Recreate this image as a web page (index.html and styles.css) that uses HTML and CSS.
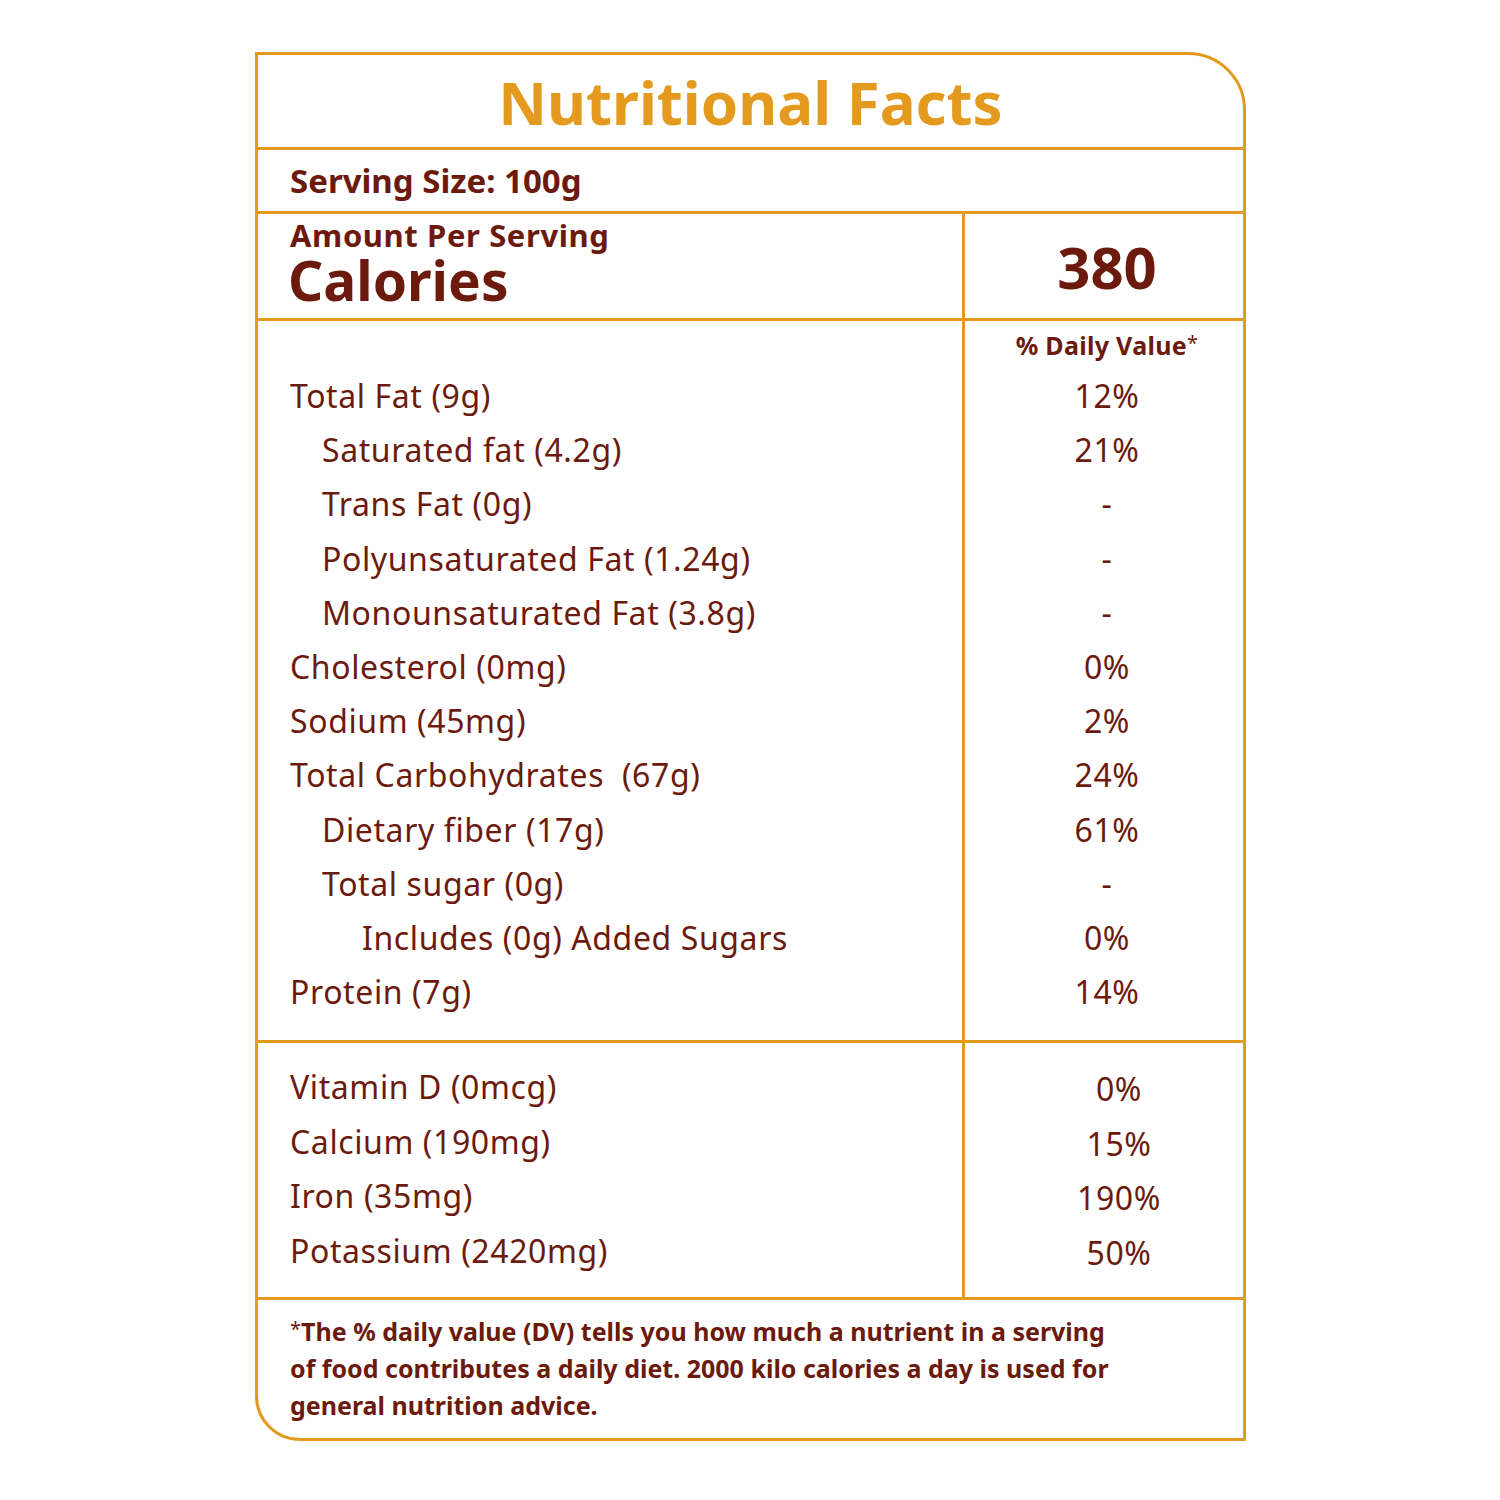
FILE: index.html
```html
<!DOCTYPE html>
<html>
<head>
<meta charset="utf-8">
<link rel="stylesheet" href="styles.css">
</head>
<body>
<div class="card">
  <div class="title">Nutritional Facts</div>
  <div class="serving">Serving Size: 100g</div>
  <div class="cal-row">
    <div class="cal-left">
      <div class="amount">Amount Per Serving</div>
      <div class="calories">Calories</div>
    </div>
    <div class="cal-right">380</div>
  </div>
  <div class="split main">
    <div class="col-left">
      <div class="dv-spacer"></div>
      <div class="row">Total Fat (9g)</div>
      <div class="row in1">Saturated fat (4.2g)</div>
      <div class="row in1">Trans Fat (0g)</div>
      <div class="row in1">Polyunsaturated Fat (1.24g)</div>
      <div class="row in1">Monounsaturated Fat (3.8g)</div>
      <div class="row">Cholesterol (0mg)</div>
      <div class="row">Sodium (45mg)</div>
      <div class="row">Total Carbohydrates&nbsp; (67g)</div>
      <div class="row in1">Dietary fiber (17g)</div>
      <div class="row in1">Total sugar (0g)</div>
      <div class="row in2">Includes (0g) Added Sugars</div>
      <div class="row">Protein (7g)</div>
    </div>
    <div class="col-right">
      <div class="dv">% Daily Value<span class="ast">*</span></div>
      <div class="row">12%</div>
      <div class="row">21%</div>
      <div class="row">-</div>
      <div class="row">-</div>
      <div class="row">-</div>
      <div class="row">0%</div>
      <div class="row">2%</div>
      <div class="row">24%</div>
      <div class="row">61%</div>
      <div class="row">-</div>
      <div class="row">0%</div>
      <div class="row">14%</div>
    </div>
  </div>
  <div class="split vit">
    <div class="col-left">
      <div class="vrow">Vitamin D (0mcg)</div>
      <div class="vrow">Calcium (190mg)</div>
      <div class="vrow">Iron (35mg)</div>
      <div class="vrow">Potassium (2420mg)</div>
    </div>
    <div class="col-right vcol">
      <div class="vrow">0%</div>
      <div class="vrow">15%</div>
      <div class="vrow">190%</div>
      <div class="vrow">50%</div>
    </div>
  </div>
  <div class="foot"><span class="ast">*</span>The % daily value (DV) tells you how much a nutrient in a serving<br>of food contributes a daily diet. 2000 kilo calories a day is used for<br>general nutrition advice.</div>
</div>
</body>
</html>
```

FILE: styles.css
```css
* { box-sizing: border-box; }
html, body { margin: 0; padding: 0; background: #ffffff; }
body {
  font-family: "Noto Sans", "Open Sans", sans-serif;
  color: #6b1a0d;
}
.card {
  margin: 52px 0 0 255px;
  width: 991px;
  border: 3px solid #e39a1e;
  border-radius: 0 58px 0 45px;
}
.title {
  height: 95px;
  border-bottom: 3px solid #e39a1e;
  text-align: center;
  color: #e39a1e;
  font-weight: 700;
  font-size: 60px;
  line-height: 94px;
  letter-spacing: 0;
}
.serving {
  height: 64px;
  border-bottom: 3px solid #e39a1e;
  padding-left: 32px;
  font-weight: 700;
  font-size: 33px;
  line-height: 62px;
}
.cal-row {
  display: flex;
  height: 107px;
  border-bottom: 3px solid #e39a1e;
}
.cal-left {
  width: 707px;
  border-right: 3px solid #e39a1e;
  padding-left: 32px;
}
.amount {
  font-weight: 700;
  font-size: 31px;
  line-height: 32px;
  letter-spacing: 0.6px;
  padding-top: 5px;
}
.calories {
  font-weight: 700;
  font-size: 55px;
  line-height: 58px;
  margin-left: -2px;
}
.cal-right {
  flex: 1;
  text-align: center;
  padding-left: 6px;
  font-weight: 700;
  font-size: 58px;
  line-height: 106px;
}
.split {
  display: flex;
  border-bottom: 3px solid #e39a1e;
}
.col-left {
  width: 707px;
  border-right: 3px solid #e39a1e;
  padding-left: 32px;
}
.col-right {
  flex: 1;
  text-align: center;
  padding-left: 6px;
}
.main { height: 722px; }
.dv-spacer { height: 48px; }
.dv {
  height: 48px;
  font-weight: 700;
  font-size: 25px;
  line-height: 44px;
  letter-spacing: 0.3px;
}
.ast {
  font-weight: 400;
  font-size: 0.8em;
  vertical-align: 0.25em;
}
.row {
  font-size: 32px;
  line-height: 54.2px;
  letter-spacing: 0.6px;
  white-space: nowrap;
}
.in1 { padding-left: 32px; }
.in2 { padding-left: 72px; }
.vit { height: 257px; }
.vit .col-left, .vit .col-right { padding-top: 17px; }
.vcol { padding-left: 30px; padding-top: 19px !important; }
.vrow {
  font-size: 32px;
  line-height: 54.6px;
  letter-spacing: 0.6px;
  white-space: nowrap;
}
.foot {
  height: 138px;
  padding: 10px 0 0 32px;
  font-weight: 700;
  font-size: 25px;
  line-height: 37px;
  white-space: nowrap;
}
```
